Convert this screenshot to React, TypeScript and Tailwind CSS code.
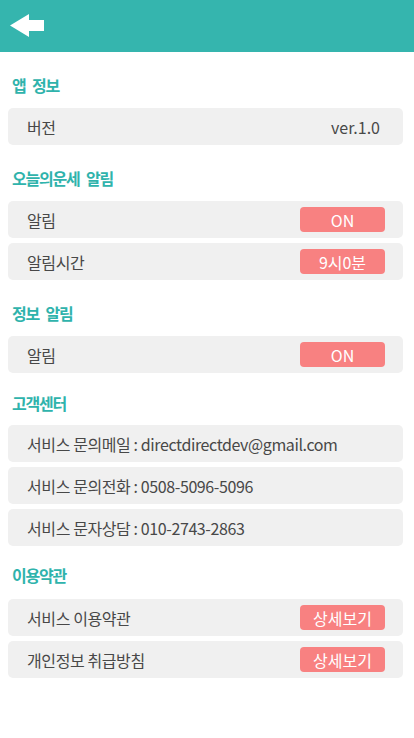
import React from 'react';

const font = { fontFamily: '"Noto Sans CJK KR", "Noto Sans", sans-serif' };

function Section({ title, top, children }: { title: string; top: string; children: React.ReactNode }) {
  return (
    <div>
      <div className={`${top} flex items-center pl-[12px] text-[16px] font-bold tracking-[-1.2px] [word-spacing:4px] text-[#2fb3ac]`}>
        {title}
      </div>
      <div className="flex flex-col gap-[5px]">{children}</div>
    </div>
  );
}

function Row({ label, right, badge }: { label: string; right?: string; badge?: string }) {
  return (
    <div className="ml-[8px] mr-[11px] h-[37px] rounded-[5px] bg-[#f0f0f0] flex items-center justify-between pl-[19px] pr-[18px] text-[16px] text-[#484848]">
      <span className="tracking-[-0.4px]">{label}</span>
      {right && <span className="pr-[5px]">{right}</span>}
      {badge && (
        <span className="w-[85px] h-[25px] rounded-[4px] bg-[#f88181] text-white text-[16px] flex items-center justify-center">
          {badge}
        </span>
      )}
    </div>
  );
}

export default function App() {
  return (
    <div className="w-[414px] h-[738px] bg-white" style={font}>
      <div className="h-[52px] bg-[#35b5ae] flex items-center pl-[10px]">
        <svg width="35" height="24" viewBox="0 0 35 24">
          <polygon points="0,11.5 19,0 19,6 34,6 34,17 19,17 19,23" fill="#ffffff" />
        </svg>
      </div>
      <div className="pb-[8px]">
        <Section title="앱 정보" top="h-[56px] pt-[10px]">
          <Row label="버전" right="ver.1.0" />
        </Section>
        <Section title="오늘의운세 알림" top="h-[56px] pt-[10px]">
          <Row label="알림" badge="ON" />
          <Row label="알림시간" badge="9시0분" />
        </Section>
        <Section title="정보 알림" top="h-[56px] pt-[10px]">
          <Row label="알림" badge="ON" />
        </Section>
        <Section title="고객센터" top="h-[52px] pt-[8px]">
          <Row label="서비스 문의메일 : directdirectdev@gmail.com" />
          <Row label="서비스 문의전화 : 0508-5096-5096" />
          <Row label="서비스 문자상담 : 010-2743-2863" />
        </Section>
        <Section title="이용약관" top="h-[53px] pt-[4px]">
          <Row label="서비스 이용약관" badge="상세보기" />
          <Row label="개인정보 취급방침" badge="상세보기" />
        </Section>
      </div>
    </div>
  );
}
